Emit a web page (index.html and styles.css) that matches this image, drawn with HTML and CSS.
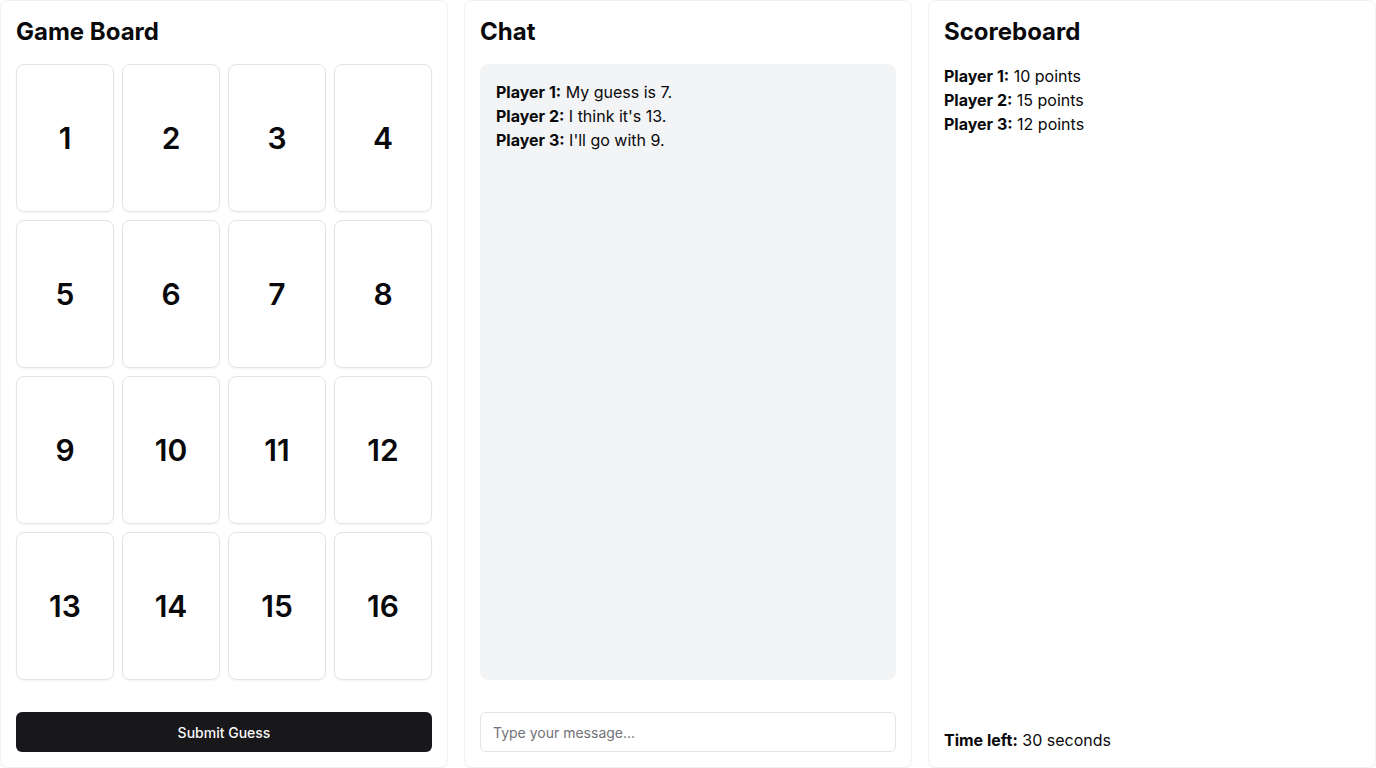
FILE: index.html
```html
<!DOCTYPE html>
<html lang="en">
<head>
<meta charset="utf-8">
<title>Guessing Game</title>
<link rel="stylesheet" href="styles.css">
</head>
<body>
<div class="layout">
  <section class="panel">
    <h2 class="title">Game Board</h2>
    <div class="board">
      <div class="tile">1</div><div class="tile">2</div><div class="tile">3</div><div class="tile">4</div>
      <div class="tile">5</div><div class="tile">6</div><div class="tile">7</div><div class="tile">8</div>
      <div class="tile">9</div><div class="tile">10</div><div class="tile">11</div><div class="tile">12</div>
      <div class="tile">13</div><div class="tile">14</div><div class="tile">15</div><div class="tile">16</div>
    </div>
    <button class="submit">Submit Guess</button>
  </section>
  <section class="panel">
    <h2 class="title">Chat</h2>
    <div class="chat">
      <p><b>Player 1:</b> My guess is 7.</p>
      <p><b>Player 2:</b> I think it's 13.</p>
      <p><b>Player 3:</b> I'll go with 9.</p>
    </div>
    <input class="msg" type="text" placeholder="Type your message...">
  </section>
  <section class="panel">
    <h2 class="title">Scoreboard</h2>
    <div class="scores">
      <p><b>Player 1:</b> 10 points</p>
      <p><b>Player 2:</b> 15 points</p>
      <p><b>Player 3:</b> 12 points</p>
    </div>
    <p class="time"><b>Time left:</b> 30 seconds</p>
  </section>
</div>
</body>
</html>
```
FILE: styles.css
```css
* { box-sizing: border-box; }
html, body { margin: 0; padding: 0; }
body {
  font-family: Inter, "Noto Sans", sans-serif;
  color: #09090b;
  background: #ffffff;
  font-size: 16px;
  line-height: 24px;
}
.layout {
  display: grid;
  grid-template-columns: repeat(3, 1fr);
  gap: 16px;
  height: 768px;
}
.panel {
  display: flex;
  flex-direction: column;
  padding: 15px;
  border: 1px solid #f1f1f3;
  border-radius: 8px;
  box-shadow: 0 1px 2px rgba(0,0,0,0.04);
  background: #fff;
  min-height: 0;
}
.title {
  margin: 0 0 16px;
  font-size: 24px;
  line-height: 32px;
  font-weight: 700;
}
.board {
  flex: 1;
  display: grid;
  grid-template-columns: repeat(4, 1fr);
  grid-template-rows: repeat(4, 1fr);
  gap: 8px;
  margin-bottom: 32px;
}
.tile {
  display: flex;
  align-items: center;
  justify-content: center;
  border: 1px solid #e4e4e7;
  border-radius: 8px;
  box-shadow: 0 1px 2px rgba(0,0,0,0.05);
  font-size: 30px;
  font-weight: 600;
}
.submit {
  height: 40px;
  border: none;
  border-radius: 6px;
  background: #18181b;
  color: #fafafa;
  font-family: inherit;
  font-size: 14px;
  font-weight: 500;
}
.chat {
  flex: 1;
  background: #f3f4f6;
  border-radius: 8px;
  padding: 16px;
  margin-bottom: 32px;
}
.chat p, .scores p { margin: 0; }
.msg {
  height: 40px;
  border: 1px solid #e4e4e7;
  border-radius: 6px;
  padding: 0 12px;
  font-family: inherit;
  font-size: 14px;
  color: #09090b;
  background: #fff;
}
.msg::placeholder { color: #71717a; }
.scores { flex: 1; }
.time { margin: 0; }
b { font-weight: 700; }
```
